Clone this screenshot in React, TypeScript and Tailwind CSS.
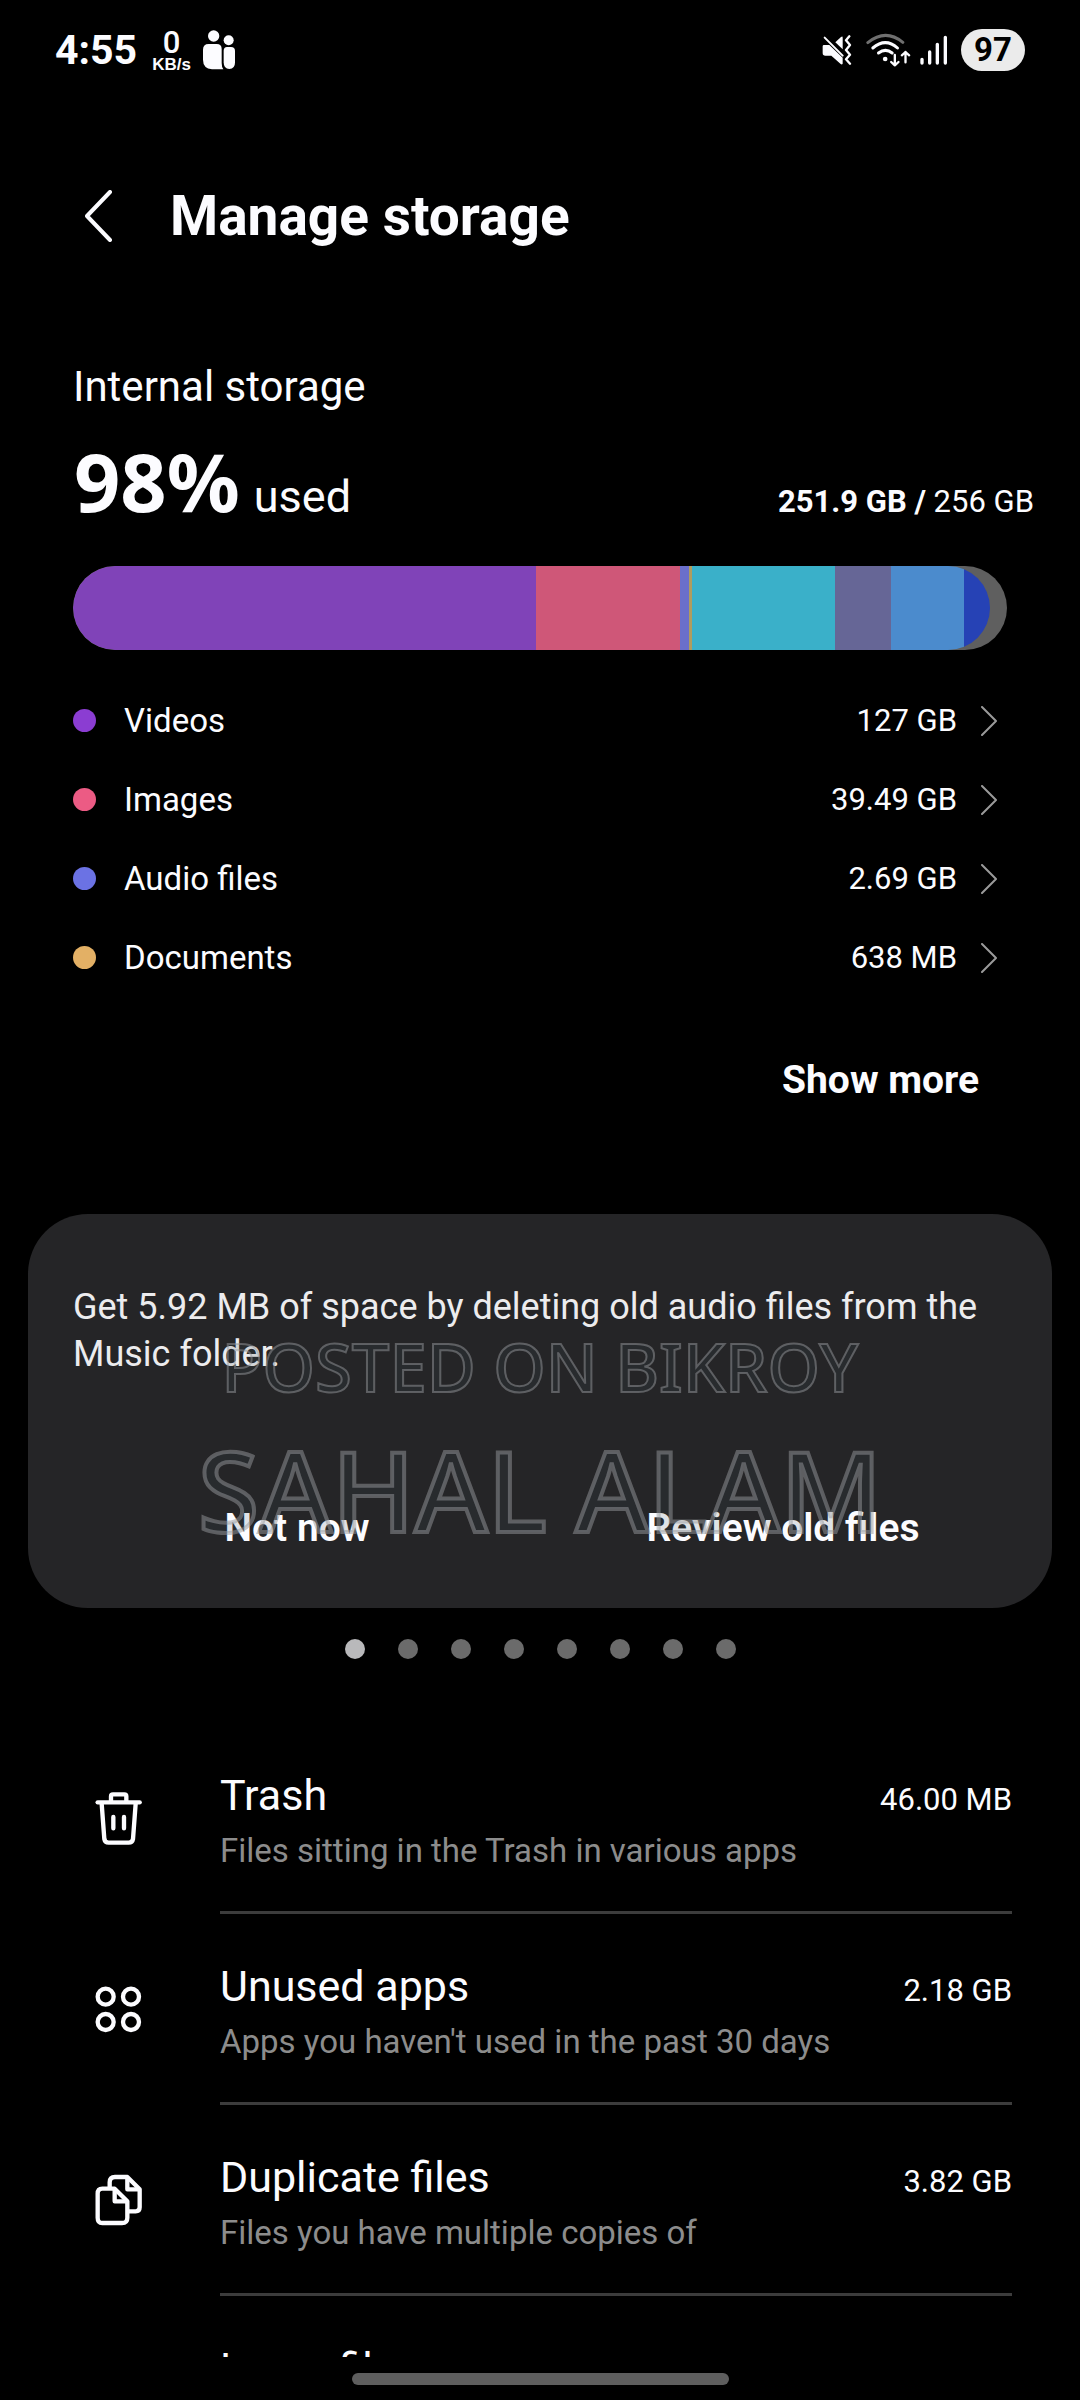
import React, { useState } from 'react';

interface Category {
  name: string;
  size: string;
  dot: string;
}

interface CleanupItem {
  title: string;
  description?: string;
  size?: string;
  icon?: React.ReactNode;
}

// share = relative width inside the used part of the bar
const segments = [
  { id: 'videos', share: 463, color: 'bg-[#8043b8]' },
  { id: 'images', share: 144, color: 'bg-[#cf5778]' },
  { id: 'audio', share: 9, color: 'bg-[#6a6fcb]' },
  { id: 'documents', share: 3, color: 'bg-[#b09c5e]' },
  { id: 'apps', share: 143, color: 'bg-[#3ab0c9]' },
  { id: 'other', share: 56, color: 'bg-[#666696]' },
  { id: 'system', share: 73, color: 'bg-[#4b8bcd]' },
  { id: 'cache', share: 26, color: 'bg-[#2642b5]' },
];

const categories: Category[] = [
  { name: 'Videos', size: '127 GB', dot: 'bg-[#8b3dd2]' },
  { name: 'Images', size: '39.49 GB', dot: 'bg-[#ec5b84]' },
  { name: 'Audio files', size: '2.69 GB', dot: 'bg-[#6b72e4]' },
  { name: 'Documents', size: '638 MB', dot: 'bg-[#e3b065]' },
];

const cleanupItems: CleanupItem[] = [
  {
    title: 'Trash',
    description: 'Files sitting in the Trash in various apps',
    size: '46.00 MB',
    icon: <TrashIcon />,
  },
  {
    title: 'Unused apps',
    description: "Apps you haven't used in the past 30 days",
    size: '2.18 GB',
    icon: <AppsIcon />,
  },
  {
    title: 'Duplicate files',
    description: 'Files you have multiple copies of',
    size: '3.82 GB',
    icon: <DuplicateIcon />,
  },
  { title: 'Large files' },
];

function TrashIcon() {
  return (
    <svg viewBox="0 0 144 168" className="w-12 h-14" fill="none" stroke="currentColor" strokeWidth="13" strokeLinecap="round" strokeLinejoin="round">
      <path d="M8 34H134" />
      <path d="M48 32V16Q48 10 54 10H88Q94 10 94 16V32" />
      <path d="M20 38L28 144Q30 155 41 155H101Q112 155 114 144L122 38" />
      <path d="M55 78V112M87 78V112" />
    </svg>
  );
}

function AppsIcon() {
  return (
    <svg viewBox="0 0 144 168" className="w-12 h-14" fill="none" stroke="currentColor" strokeWidth="13">
      <circle cx="32" cy="44" r="24" />
      <circle cx="108" cy="44" r="24" />
      <circle cx="32" cy="120" r="24" />
      <circle cx="108" cy="120" r="24" />
    </svg>
  );
}

function DuplicateIcon() {
  return (
    <svg viewBox="0 0 144 168" className="w-12 h-14" fill="none" stroke="currentColor" strokeWidth="13" strokeLinejoin="round">
      <path d="M44 45V28Q44 12 60 12H97L134 49V103Q134 115 122 115H100" />
      <path d="M97 14V49H132" />
      <path d="M22 47H59L97 85V134Q97 150 81 150H22Q8 150 8 134V62Q8 47 22 47Z" />
      <path d="M59 49V85H95" />
    </svg>
  );
}

function ParentalIcon() {
  return (
    <svg viewBox="0 0 96 118" className="w-8 h-10" fill="currentColor">
      <circle cx="32" cy="17" r="17" />
      <circle cx="77" cy="30" r="15" />
      <path d="M17 41H41Q56 41 56 56V98Q56 110 61 117H27Q0 114 0 88V58Q0 41 17 41Z" />
      <path d="M72 50H84Q96 50 96 62V96Q96 116 79 116Q62 116 62 96V62Q62 50 72 50Z" />
    </svg>
  );
}

function MuteIcon() {
  return (
    <svg viewBox="0 0 90 90" className="w-[30px] h-[30px]" fill="none">
      <path d="M2 34Q2 30 6 30H22L62 68V86Q60 90 56 87L28 62H10Q2 62 2 54Z" fill="currentColor" />
      <path d="M40 22L57 6Q62 2 62 8V43Z" fill="currentColor" />
      <path d="M8 8L62 62" stroke="currentColor" strokeWidth="6" strokeLinecap="round" />
      <path d="M82 4L72 16L84 30L72 45L84 59L72 73L84 86" stroke="currentColor" strokeWidth="7" strokeLinecap="round" strokeLinejoin="round" />
    </svg>
  );
}

function WifiIcon() {
  return (
    <svg viewBox="0 0 134 102" className="w-[45px] h-[34px]" fill="none" stroke="currentColor" strokeWidth="9" strokeLinecap="round" strokeLinejoin="round">
      <path d="M5 29Q58 -14 110 28" stroke="#6f6f6f" />
      <path d="M20 45Q58 13 94 45" />
      <path d="M37 60Q58 44 78 60" />
      <circle cx="57" cy="78" r="7" fill="currentColor" stroke="none" />
      <path d="M86 66V97M75 87L86 97L97 87" strokeWidth="7" />
      <path d="M118 88V57M107 67L118 57L129 67" strokeWidth="7" />
    </svg>
  );
}

function SignalIcon() {
  return (
    <svg viewBox="0 0 84 90" className="w-7 h-[30px]" stroke="currentColor" strokeWidth="10" strokeLinecap="round">
      <path d="M6 73V84M29 51V84M52 28V84M76 7V84" />
    </svg>
  );
}

function StatusBar() {
  return (
    <div className="h-[100px] shrink-0 px-[55px] flex items-center justify-between">
      <div className="flex items-center">
        <span className="text-[41px] leading-[48px] font-bold">4:55</span>
        <div className="ml-[15px] mt-1 flex flex-col items-center font-bold">
          <span className="text-[31px] leading-[26px] font-medium">0</span>
          <span className="text-[17px] leading-[18px] font-['Liberation_Sans',sans-serif]">KB/s</span>
        </div>
        <span className="ml-3">
          <ParentalIcon />
        </span>
      </div>
      <div className="flex items-center">
        <MuteIcon />
        <span className="ml-[14px]">
          <WifiIcon />
        </span>
        <span className="ml-[9px]">
          <SignalIcon />
        </span>
        <span className="ml-[13px] w-16 h-[42px] rounded-full bg-[#ebebeb] text-black text-[33px] leading-[42px] font-bold text-center">
          97
        </span>
      </div>
    </div>
  );
}

function StorageSummary() {
  return (
    <section className="pt-[77px]">
      <h2 className="pl-[73px] text-[42px] leading-[48px]">Internal storage</h2>
      <div className="mt-[22px] pl-[74px] pr-[46px] flex items-baseline">
        <span className="font-['Noto_Sans',sans-serif] text-[81px] leading-[96px] font-bold">98%</span>
        <span className="ml-[14px] text-[45px] leading-[48px]">used</span>
        <span className="ml-auto text-[31px] leading-[40px]">
          <b className="font-bold">251.9 GB /</b> 256 GB
        </span>
      </div>

      <div className="mt-[37px] mx-[73px] h-[84px] rounded-full overflow-hidden bg-[#5f5f5f]">
        <div className="w-[98.2%] h-full rounded-full overflow-hidden flex">
          {segments.map((segment) => (
            <div key={segment.id} className={segment.color} style={{ flexGrow: segment.share }} />
          ))}
        </div>
      </div>

      <ul className="mt-[31px] pl-[73px] pr-[83px]">
        {categories.map((category) => (
          <li key={category.name}>
            <button className="w-full h-[79px] flex items-center text-left">
              <span className={`w-[23px] h-[23px] rounded-full ${category.dot}`} />
              <span className="ml-7 text-[33px] leading-[40px]">{category.name}</span>
              <span className="ml-auto text-[31px] leading-[40px]">{category.size}</span>
              <svg viewBox="0 0 16 30" className="ml-6 w-4 h-[30px] text-[#9a9a9a]" fill="none" stroke="currentColor" strokeWidth="2" strokeLinecap="round" strokeLinejoin="round">
                <path d="M1 1L15 15L1 29" />
              </svg>
            </button>
          </li>
        ))}
      </ul>

      <div className="mt-[59px] pr-[101px] flex justify-end">
        <button className="text-[39px] leading-[48px] font-bold">Show more</button>
      </div>
    </section>
  );
}

function SuggestionCard() {
  return (
    <section className="relative mx-7 mt-[110px] pt-[70px] pb-14 rounded-[60px] bg-[#252527]">
      <p className="px-[45px] text-[36px] leading-[47px] text-[#ececee]">
        Get 5.92 MB of space by deleting old audio files from the Music folder.
      </p>
      <div className="mt-[126px] px-[26px] grid grid-cols-2">
        <button className="text-[39px] leading-[48px] font-semibold">Not now</button>
        <button className="text-[39px] leading-[48px] font-semibold">Review old files</button>
      </div>

      {/* Outlined watermark over the card */}
      <div className="absolute inset-x-0 top-[112px] flex flex-col items-center gap-[23px] whitespace-nowrap pointer-events-none font-['Noto_Sans',sans-serif] text-[#3c5055]/15 [stroke-linejoin:round]">
        <span className="text-[67px] leading-[80px] font-medium [-webkit-text-stroke:2px_rgba(150,152,155,0.5)]">POSTED ON BIKROY</span>
        <span className="text-[111px] leading-[120px] font-medium [-webkit-text-stroke:4px_rgba(150,152,155,0.5)]">SAHAL ALAM</span>
      </div>
    </section>
  );
}

function PageDots() {
  const [active, setActive] = useState(0);

  return (
    <div className="mt-[31px] flex justify-center gap-[33px]">
      {Array.from({ length: 8 }, (_, i) => (
        <button
          key={i}
          aria-label={`Suggestion ${i + 1}`}
          onClick={() => setActive(i)}
          className={`w-5 h-5 rounded-full ${i === active ? 'bg-[#b9b9bb]' : 'bg-[#6b6b6b]'}`}
        />
      ))}
    </div>
  );
}

function CleanupList() {
  return (
    <ul className="mt-16 pl-[95px] pr-[68px]">
      {cleanupItems.map((item) => (
        <li key={item.title}>
          <button className="w-full flex items-center text-left">
            <span className="w-[125px] shrink-0">{item.icon}</span>
            <span className="flex-1 pt-[46px] pb-10 border-b-[3px] border-[#3c3c3c]">
              <span className="flex items-baseline justify-between">
                <span className="text-[43px] leading-[52px]">{item.title}</span>
                <span className="text-[31px] leading-[40px]">{item.size}</span>
              </span>
              <span className="mt-[10px] block min-h-10 text-[33px] leading-[40px] text-[#8c8c8c]">{item.description}</span>
            </span>
          </button>
        </li>
      ))}
    </ul>
  );
}

export default function App() {
  return (
    <div className="h-screen flex flex-col bg-black text-[#fcfcff] font-['Roboto',sans-serif]">
      <StatusBar />

      <main className="flex-1 min-h-0 overflow-hidden">
        <header className="mt-[46px] h-[140px] pl-[85px] flex items-center">
          <button aria-label="Back">
            <svg viewBox="0 0 28 52" className="w-7 h-[52px]" fill="none" stroke="currentColor" strokeWidth="4" strokeLinecap="round" strokeLinejoin="round">
              <path d="M25 2L2 26L25 50" />
            </svg>
          </button>
          <h1 className="ml-[57px] text-[55px] leading-[64px] font-bold">Manage storage</h1>
        </header>

        <StorageSummary />
        <SuggestionCard />
        <PageDots />
        <CleanupList />
      </main>

      {/* Gesture bar */}
      <div className="h-[43px] shrink-0 flex items-center justify-center">
        <div className="w-[377px] h-3 rounded-full bg-[#5e5e5e]" />
      </div>
    </div>
  );
}
